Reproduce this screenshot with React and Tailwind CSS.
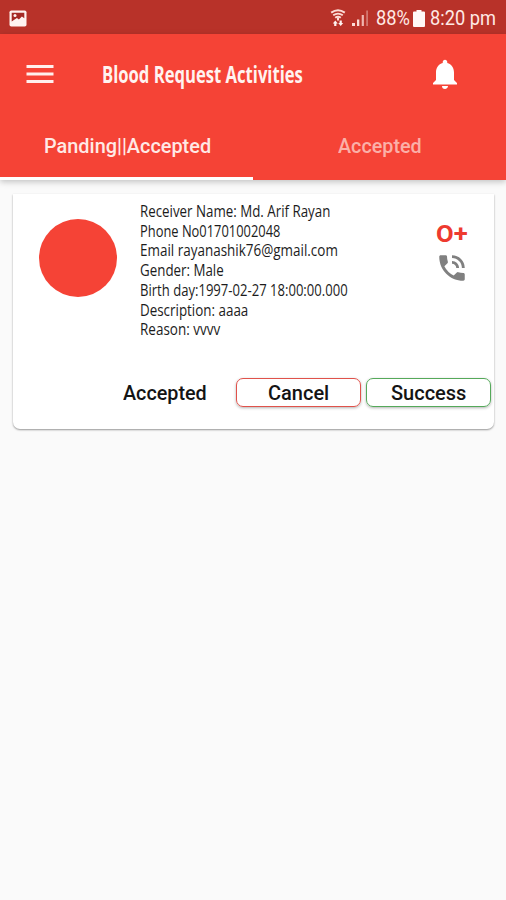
import { useLayoutEffect, useRef, useState } from "react";
import { MdMenu, MdNotifications, MdPhoneInTalk } from "react-icons/md";

const details = [
  { text: "Receiver Name: Md. Arif Rayan", width: 190 },
  { text: "Phone No01701002048", width: 140.5 },
  { text: "Email rayanashik76@gmail.com", width: 198 },
  { text: "Gender: Male", width: 83.5 },
  { text: "Birth day:1997-02-27 18:00:00.000", width: 207.5 },
  { text: "Description: aaaa", width: 108 },
  { text: "Reason: vvvv", width: 80 },
];

// Condenses a line of text horizontally to the given width
const FitText = ({ width, className = "", children }) => {
  const ref = useRef(null);
  const [scale, setScale] = useState(1);

  useLayoutEffect(() => {
    setScale(width / ref.current.offsetWidth);
  }, [width]);

  return (
    <span className={`block ${className}`} style={{ width }}>
      <span className="block" style={{ transform: `scaleX(${scale})`, transformOrigin: "left" }}>
        <span ref={ref} className="inline-block whitespace-nowrap">
          {children}
        </span>
      </span>
    </span>
  );
};

const PictureIcon = () => (
  <svg width="18" height="17" viewBox="0 0 18 17">
    <rect x="0.5" y="0.5" width="17" height="16" rx="1.8" fill="#fff3f0" />
    <path d="M2.7 2.8h12.6v5.4l-2.4-1.6-3 3-2-1.6-5.2 3.6z" fill="#a52a25" />
    <circle cx="6" cy="5.4" r="1.5" fill="#fff3f0" />
  </svg>
);

const WifiIcon = () => (
  <svg width="16" height="18" viewBox="0 0 16 18" fill="none" stroke="#fbdcd6">
    <path d="M1.2 3.6Q8-1.2 14.8 3.6" strokeWidth="2" />
    <path d="M3.2 6.3Q8 2.8 12.8 6.3" strokeWidth="1.8" />
    <path d="M5.2 8.8Q8 6.6 10.8 8.8" strokeWidth="1.8" />
    <path d="M8 8.5v3" strokeWidth="2" />
    <path d="M2.8 14.6 5.3 11.6l2.5 3H6.4V17H4.2v-2.4zM8.2 14h1.4v-2.4h2.2V14h1.4l-2.5 3z" fill="#fff3f0" stroke="none" />
  </svg>
);

const SignalIcon = () => (
  <svg width="17" height="16" viewBox="0 0 17 16">
    <path d="M0 13h3v3H0zM5 9.5h2.3V16H5z" fill="#fbdcd6" />
    <path d="M9.7 5h2.2v11H9.7z" fill="#f0b5ae" />
    <path d="M14.2 0.5h1.8V16h-1.8z" fill="#d27770" />
  </svg>
);

const BatteryIcon = () => (
  <svg width="12" height="17" viewBox="0 0 12 17" fill="#fff8f6">
    <path d="M3.5 0h5v1.5H11a1 1 0 0 1 1 1V16a1 1 0 0 1-1 1H1a1 1 0 0 1-1-1V2.5a1 1 0 0 1 1-1h2.5z" />
  </svg>
);

const StatusBar = () => (
  <div className="flex h-[34px] items-center bg-[#b83229] pl-[9px] pr-[10px] pt-[2px] text-[#ffe9e5]">
    <PictureIcon />
    <div className="ml-auto flex items-center">
      <WifiIcon />
      <div className="ml-[6px] mr-[7px]">
        <SignalIcon />
      </div>
      <FitText width={34} className="text-[21px] leading-7">
        88%
      </FitText>
      <div className="ml-[3px] mr-[5px]">
        <BatteryIcon />
      </div>
      <FitText width={66} className="text-[21px] leading-7">
        8:20 pm
      </FitText>
    </div>
  </div>
);

const Header = () => (
  <header className="relative z-10 bg-[#f54336] text-white shadow-[0_2px_6px_rgba(0,0,0,0.22)]">
    <div className="flex h-20 items-center pl-[22px] pr-[43px]">
      <MdMenu size={36} className="text-[#fff0ed]" />
      <FitText
        width={201}
        className="ml-[44px] font-['Open_Sans'] text-[23px] leading-8 font-bold text-[#fff3f0]"
      >
        Blood Request Activities
      </FitText>
      <MdNotifications size={36} className="ml-auto" />
    </div>
    <div className="grid h-[66px] grid-cols-2 text-xl font-medium">
      <button className="flex justify-center border-b-[3px] border-white pt-[18px] text-[#ffe9e5]">
        <FitText width={167} className="ml-[1px]">
          Panding||Accepted
        </FitText>
      </button>
      <button className="flex justify-center pt-[18px] text-[#fbb0a8]">
        <FitText width={84}>Accepted</FitText>
      </button>
    </div>
  </header>
);

const RequestCard = () => (
  <div className="mr-3 ml-[13px] flex h-[235px] flex-col rounded-b-[7px] bg-white shadow-[0_1px_2px_rgba(0,0,0,0.4)]">
    <div className="flex pt-2">
      <div className="mt-[17px] ml-[26px] size-[78px] shrink-0 rounded-full bg-[#f54336]" />
      <div className="ml-[23px] font-['Open_Sans'] text-[15.5px] leading-[19.7px] text-[#1c1c1c]">
        {details.map(({ text, width }) => (
          <FitText key={text} width={width}>
            {text}
          </FitText>
        ))}
      </div>
      <div className="mt-4 mr-[25px] ml-auto flex flex-col items-center">
        <FitText width={32} className="text-2xl font-bold text-[#ee3a2f]">
          O+
        </FitText>
        <MdPhoneInTalk size={34} className="mt-[1px] text-[#808080]" />
      </div>
    </div>
    <div className="mt-auto mr-[3px] mb-[22px] flex items-center justify-end text-xl font-medium text-[#141414]">
      <FitText width={84} className="mr-[29px]">
        Accepted
      </FitText>
      <button className="flex h-[29px] w-[125px] items-center justify-center rounded-[7px] border-[1.5px] border-[#e0524b] shadow-[0_1px_3px_rgba(0,0,0,0.3)]">
        <FitText width={61}>Cancel</FitText>
      </button>
      <button className="ml-[5px] flex h-[29px] w-[125px] items-center justify-center rounded-[7px] border-[1.5px] border-[#55a95a] shadow-[0_1px_3px_rgba(0,0,0,0.3)]">
        <FitText width={75}>Success</FitText>
      </button>
    </div>
  </div>
);

const App = () => {
  return (
    <div className="flex h-[900px] w-[506px] flex-col overflow-hidden bg-[#fafafa] font-[Roboto,sans-serif]">
      <StatusBar />
      <Header />
      <main className="pt-[14px]">
        <RequestCard />
      </main>
    </div>
  );
};

export default App;
